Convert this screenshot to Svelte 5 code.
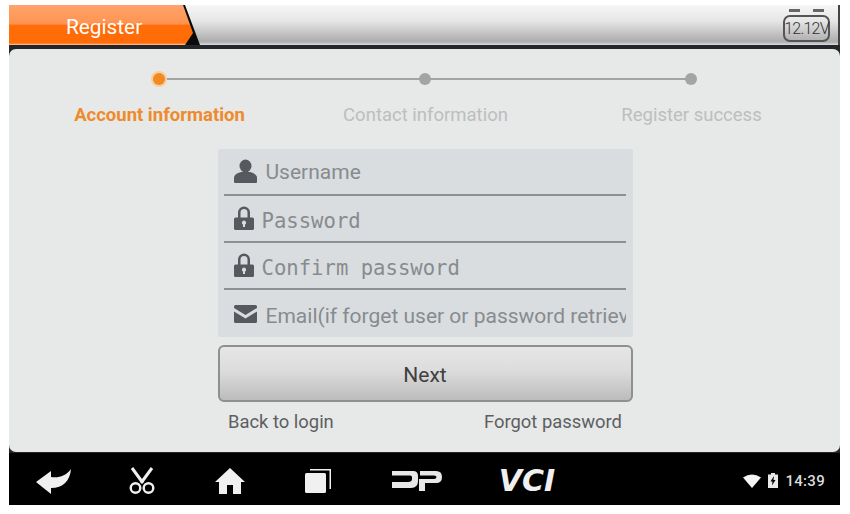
<script>
    const steps = [
        { label: "Account information", active: true },
        { label: "Contact information", active: false },
        { label: "Register success", active: false },
    ];
</script>

<div class="frame">
    <header class="topbar">
        <div class="tab-edge">
            <div class="tab">Register</div>
        </div>
        <div class="voltage">
            <span class="terminals"></span>
            <span class="volt-box">12.12V</span>
        </div>
    </header>

    <main class="panel">
        <div class="stepper">
            {#each steps as step}
                <div class="step" class:active={step.active}>
                    <span class="dot"></span>
                    <span class="step-label">{step.label}</span>
                </div>
            {/each}
        </div>

        <form class="fields">
            <label class="field">
                <svg width="24" height="24" viewBox="0 0 24 24">
                    <ellipse cx="11.500" cy="6" rx="6" ry="6.500" />
                    <path d="M0 22v-4c0-3 3-5 7-6h9c4 1 7 3 7 6v4q0 1-1 1H1q-1 0-1-1z" />
                </svg>
                <input type="text" placeholder="Username" />
            </label>
            <label class="field mono">
                <svg width="24" height="24" viewBox="2 2 24 24">
                    <path d="M6 13V7.500a6 6 0 0 1 12 0V13h-2.500V7.500a3.500 3.500 0 0 0-7 0V13z" />
                    <path fill-rule="evenodd" d="M3.500 12.500h17q1.500 0 1.500 1.500v9.500q0 1.500-1.500 1.500h-17Q2 25 2 23.500V14q0-1.500 1.500-1.500zM12 15.500a2.200 2.200 0 0 0-1 4.100V22h2v-2.400a2.200 2.200 0 0 0-1-4.100z" />
                </svg>
                <input type="password" placeholder="Password" />
            </label>
            <label class="field mono">
                <svg width="24" height="24" viewBox="2 2 24 24">
                    <path d="M6 13V7.500a6 6 0 0 1 12 0V13h-2.500V7.500a3.500 3.500 0 0 0-7 0V13z" />
                    <path fill-rule="evenodd" d="M3.500 12.500h17q1.500 0 1.500 1.500v9.500q0 1.500-1.500 1.500h-17Q2 25 2 23.500V14q0-1.500 1.500-1.500zM12 15.500a2.200 2.200 0 0 0-1 4.100V22h2v-2.400a2.200 2.200 0 0 0-1-4.100z" />
                </svg>
                <input type="password" placeholder="Confirm password" />
            </label>
            <label class="field last">
                <svg width="24" height="24" viewBox="0 0 24 24">
                    <path d="M0 3.500Q0 2 1.500 2h20Q23 2 23 3.500V5l-11.500 7L0 5z" />
                    <path d="M0 8.500l11.500 7 11.500-7v10q0 1.500-1.500 1.500h-20Q0 20 0 18.500z" />
                </svg>
                <input type="email" placeholder="Email(if forget user or password retrieve)" />
            </label>
        </form>

        <button class="next" type="button">Next</button>

        <div class="links">
            <span>Back to login</span>
            <span>Forgot password</span>
        </div>
    </main>

    <nav class="navbar">
        <span class="nav-item">
            <svg width="36" height="28" viewBox="0 0 36 28" fill="#f0f0f0">
                <path d="M0 15L15 4v6c8 1 15-1 20-8-1 12-8 19-20 19v6z" />
            </svg>
        </span>
        <span class="nav-item">
            <svg width="28" height="28" viewBox="0 0 28 28" fill="none" stroke="#f0f0f0">
                <path d="M4 1l11 15M24 1L13 16" stroke-width="3" />
                <circle cx="7.500" cy="21" r="4.800" stroke-width="2.400" />
                <circle cx="20.500" cy="21" r="4.800" stroke-width="2.400" />
            </svg>
        </span>
        <span class="nav-item">
            <svg width="30" height="28" viewBox="0 0 30 28" fill="#f0f0f0">
                <path d="M15 1L0 15h4v12h8v-9h6v9h8V15h4z" />
            </svg>
        </span>
        <span class="nav-item">
            <svg width="28" height="26" viewBox="0 0 28 26" fill="#f0f0f0">
                <path d="M6 1h21v20h-1.500V2.500H6z" />
                <rect x="1" y="5" width="21" height="20" rx="1.500" />
            </svg>
        </span>
        <span class="nav-item wide">
            <svg width="50" height="22" viewBox="0 0 50 22" fill="#e8e8e8">
                <path d="M0 1H21Q26 1 26 6V11Q26 18 19 18H0V12H16Q20 12 20 9V7Q20 5.500 18 5.500H0Z" />
                <path d="M28 1H44Q50 1 50 7Q50 13 44 13H33V21H27V9H42Q44.500 9 44.500 7Q44.500 5.500 42 5.500H28Z" />
            </svg>
        </span>
        <span class="nav-item wide vci">VCI</span>
        <div class="status">
            <svg width="18" height="14" viewBox="0 0 18 14" fill="#f5f5f5">
                <path d="M0 3.500Q9-2.500 18 3.500L9 14z" />
            </svg>
            <svg width="10" height="15" viewBox="0 0 10 15">
                <path fill="#e8e8e8" d="M3 0h4v1.500h3V15H0V1.500h3z" />
                <path fill="#000" d="M6 3L2.500 8.500h2L4 12.500 7.500 7h-2z" />
            </svg>
            <span class="clock">14:39</span>
        </div>
    </nav>
</div>

<style>
    :global(body) {
        background: #fff;
    }

    .frame {
        width: 831px;
        height: 500px;
        margin: 5px 0 0 9px;
        display: flex;
        flex-direction: column;
        background: #23262b;
        font-family: Roboto, "Liberation Sans", sans-serif;
        overflow: hidden;
    }

    .topbar {
        height: 40px;
        flex: none;
        display: flex;
        justify-content: space-between;
        background: linear-gradient(#f6f6f6 0, #e6e6e6 40%, #c4c4c4 70%, #adadad 92%, #dcdcdc 100%);
        border-right: 2px solid #444;
        box-sizing: border-box;
    }

    .tab-edge {
        width: 191px;
        background: #0b0b0b;
        clip-path: polygon(0 0, 176px 0, 191px 100%, 0 100%);
    }

    .tab {
        width: 184px;
        height: 40px;
        box-sizing: border-box;
        padding: 7px 0 0 57px;
        color: #fff;
        font-size: 20.800px;
        line-height: 30px;
        background: linear-gradient(#ffa36b 0, #ff9350 48%, #ff6c08 50%, #ff6c08 95%, #ffc9a0 100%);
        clip-path: polygon(0 0, 174px 0, 184px 28px, 176px 40px, 0 40px);
    }

    .voltage {
        width: 47px;
        margin-right: 8px;
        display: flex;
        flex-direction: column;
        align-items: center;
    }

    .terminals {
        width: 35px;
        height: 3px;
        margin-top: 4px;
        background: linear-gradient(90deg, #666 11px, transparent 11px, transparent 24px, #666 24px);
    }

    .volt-box {
        width: 47px;
        height: 27px;
        margin-top: 3px;
        box-sizing: border-box;
        border: 2px solid #555;
        border-radius: 7px;
        display: flex;
        justify-content: center;
        white-space: nowrap;
        font-size: 16px;
        line-height: 24px;
        font-weight: 300;
        color: #333;
        letter-spacing: -0.800px;
    }

    .panel {
        height: 403px;
        margin-top: 4px;
        flex: none;
        background: #e7e8e8;
        border-radius: 7px;
        display: flex;
        flex-direction: column;
        align-items: center;
    }

    .stepper {
        display: grid;
        grid-template-columns: repeat(3, 266px);
        margin-top: 24px;
    }

    .step {
        position: relative;
        display: flex;
        flex-direction: column;
        align-items: center;
        gap: 19px;
    }

    .step:not(:last-child)::after {
        content: "";
        position: absolute;
        top: 5px;
        left: 50%;
        width: 100%;
        height: 2px;
        background: #a3a5a5;
    }

    .dot {
        width: 12px;
        height: 12px;
        border-radius: 50%;
        background: #a3a5a5;
        z-index: 1;
    }

    .step.active .dot {
        background: #f28a21;
        box-shadow: 0 0 0 2px #f5cfa4;
    }

    .step-label {
        padding-left: 2px;
        font-size: 18.500px;
        line-height: 22px;
        color: #bcbebe;
    }

    .step.active .step-label {
        color: #ee8b2a;
        font-weight: 700;
    }

    .fields {
        width: 415px;
        height: 188px;
        margin-top: 23px;
        margin-left: 1px;
        display: flex;
        flex-direction: column;
        padding: 0 7px 0 6px;
        box-sizing: border-box;
        background: #d9dde0;
        border-radius: 2px;
    }

    .field {
        height: 47px;
        flex: none;
        box-sizing: border-box;
        display: flex;
        align-items: center;
        gap: 8px;
        padding: 1px 0 0 10px;
        border-bottom: 2px solid #8d9092;
        color: #565a5e;
    }

    .field.last {
        border-bottom: 0;
        flex: 1;
        padding-top: 3px;
    }

    .field svg {
        flex: none;
        fill: currentColor;
        overflow: visible;
    }

    .field.mono {
        gap: 4px;
    }

    input {
        flex: 1;
        min-width: 0;
        border: 0;
        padding: 0;
        background: transparent;
        font: 400 21px/28px Roboto, "Liberation Sans", sans-serif;
        outline: none;
    }

    input::placeholder {
        color: #888b8d;
        opacity: 1;
    }

    .mono input {
        padding-top: 4px;
        font: 400 20.600px/28px "DejaVu Sans Mono", "Liberation Mono", monospace;
    }

    .last input {
        padding-top: 2px;
    }

    .next {
        width: 415px;
        height: 57px;
        margin: 8px 0 0 1px;
        padding-top: 3px;
        border: 2px solid #8f8f8f;
        border-radius: 6px;
        background: linear-gradient(#e6e6e6 0, #dcdcdc 45%, #bcbcbc 100%);
        color: #404040;
        font: 400 21px Roboto, "Liberation Sans", sans-serif;
    }

    .links {
        width: 394px;
        margin: 9px 0 0 1px;
        display: flex;
        justify-content: space-between;
        font-size: 18.400px;
        line-height: 22px;
        color: #5c5f61;
    }

    .navbar {
        flex: 1;
        margin-top: 1px;
        display: flex;
        align-items: center;
        background: #000;
        padding: 3px 15px 0 0;
    }

    .nav-item {
        width: 88px;
        flex: none;
        display: flex;
        justify-content: center;
        color: #f0f0f0;
    }

    .nav-item:first-child {
        margin-left: 1px;
    }

    .nav-item.wide {
        width: 110px;
    }

    .vci {
        font: italic 700 30px/30px "DejaVu Sans", sans-serif;
    }

    .status {
        margin-left: auto;
        display: flex;
        align-items: center;
        gap: 7px;
        color: #dcdcdc;
    }

    .clock {
        font-size: 15px;
        font-weight: 500;
        letter-spacing: 0.300px;
    }
</style>
